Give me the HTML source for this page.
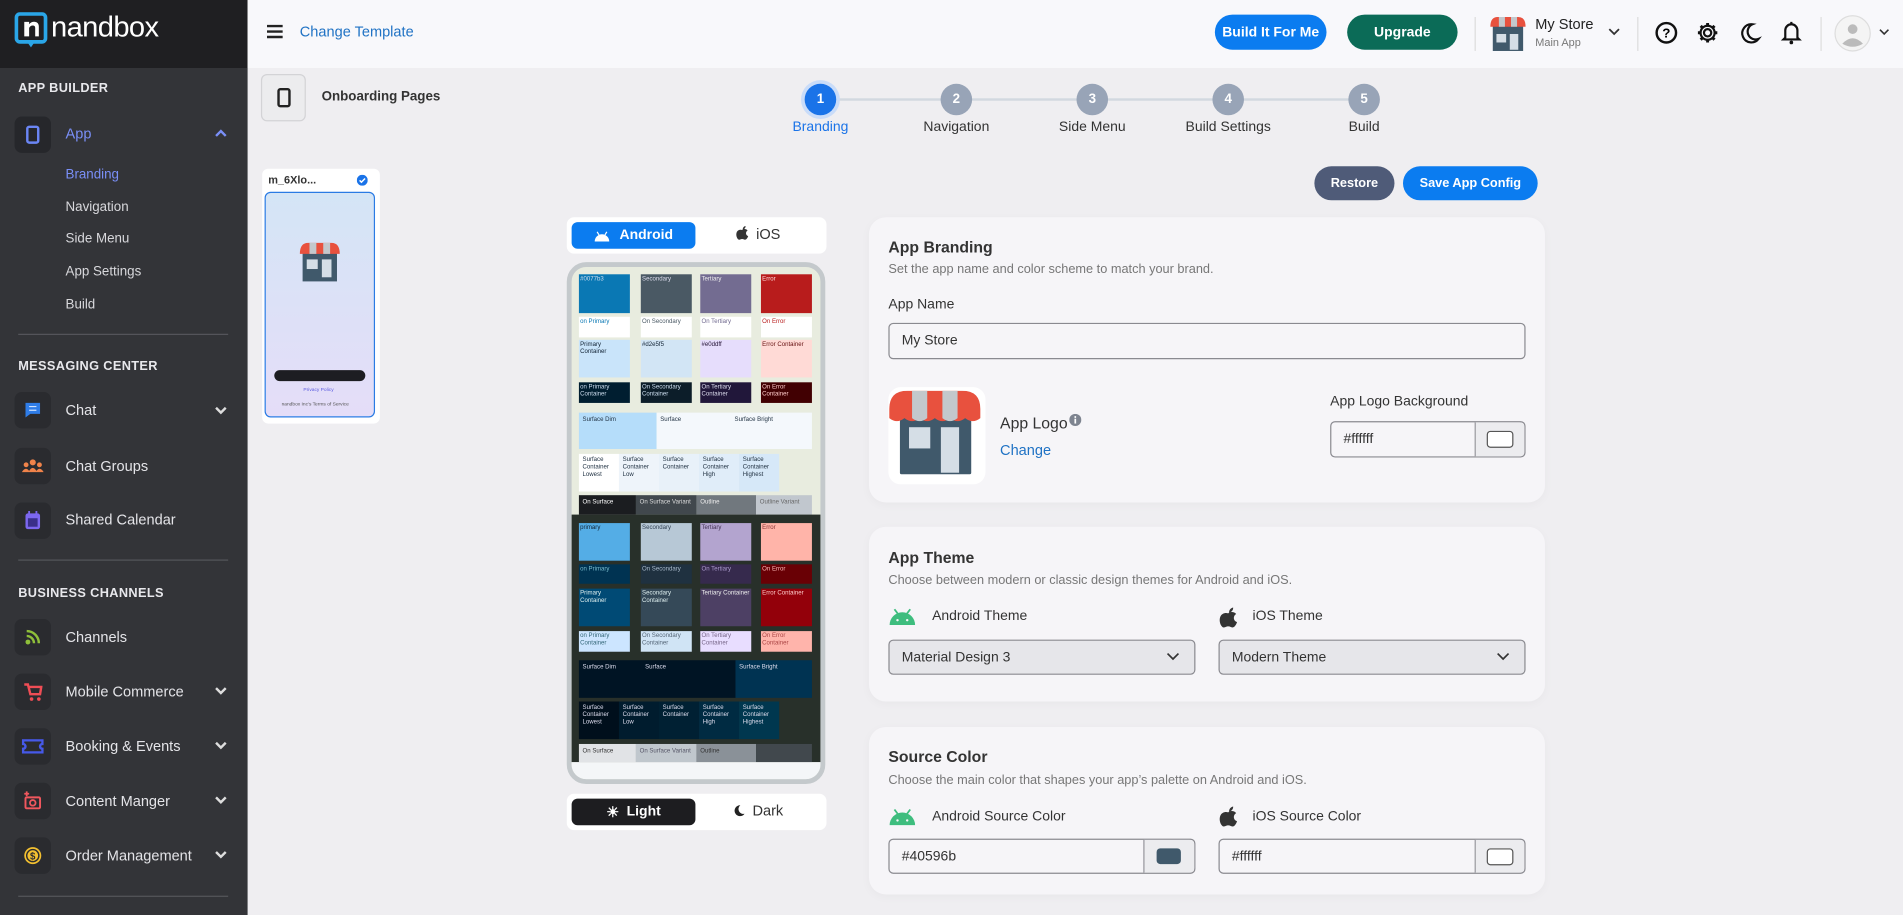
<!DOCTYPE html>
<html><head><meta charset="utf-8">
<style>
*{box-sizing:border-box;margin:0;padding:0}
html,body{width:1903px;height:915px;overflow:hidden;background:#efeef1;font-family:"Liberation Sans",sans-serif}
#w{position:absolute;left:0;top:0;width:1568px;height:754px;transform:scale(1.21365);transform-origin:0 0;background:#efeef1}
.a{position:absolute}
.sb{left:0;top:0;width:204px;height:754px;background:#333438}
.logo{left:0;top:0;width:204px;height:56px;background:#1f1f22}
.sec{left:15px;font-size:10.5px;font-weight:bold;color:#e8e8ec;letter-spacing:.3px}
.ib{left:12px;width:30px;height:30px;background:#2a2b2f;border-radius:6px;display:flex;align-items:center;justify-content:center}
.it{left:54px;font-size:12px;color:#e4e4e8}
.sub{left:54px;font-size:11px;color:#d8d8dc}
.chev{left:176px;width:12px;height:12px}
.hr{left:15px;width:173px;height:1px;background:#55565b}
.hdr{left:204px;top:0;width:1364px;height:56px;background:#f8f8fb}
.btn{border-radius:15px;color:#fff;font-size:11.5px;font-weight:bold;display:flex;align-items:center;justify-content:center}
.card{left:716px;width:557px;background:#f6f5f8;border-radius:14px;box-shadow:0 2px 8px rgba(0,0,0,.03)}
.ttl{font-size:13px;font-weight:bold;color:#333}
.ds{font-size:10.5px;color:#777}
.lb{font-size:11.5px;color:#333}
.inp{border:1px solid #8a8a90;border-radius:4px;background:#f6f5f8;font-size:11.5px;color:#333;display:flex;align-items:center;padding-left:10px}
.sel{background:#e6e6ea}
.c{position:absolute;font-size:5px;line-height:6px;padding:1px;overflow:hidden}
.step{width:26px;height:26px;border-radius:50%;background:#98a4b7;color:#fff;font-size:11px;font-weight:bold;display:flex;align-items:center;justify-content:center;top:69px}
.sl{top:99px;font-size:11.5px;color:#333;text-align:center;width:120px}
</style></head><body><div id="w">

<div class="a sb"></div>
<div class="a logo"></div>
<svg class="a" style="left:12px;top:10px" width="28" height="32" viewBox="0 0 28 32"><rect x="1.5" y="1.5" width="24" height="23" rx="3" fill="none" stroke="#2aa6e8" stroke-width="3"/><path d="M10 24 L13.5 29 L17 24" fill="#2aa6e8"/><path d="M8 8h4v2 q2-2.5 5-2 q3 .5 3 4v8h-3v-7q0-2-2-2t-3 2v7h-4z" fill="#fff"/></svg>
<div class="a" style="left:42px;top:9px;font-size:24px;color:#fff;letter-spacing:-.5px">nandbox</div>

<div class="a sec" style="top:67px">APP BUILDER</div>
<div class="a ib" style="top:96px;background:#26272b"><svg width="12" height="16"><rect x="1.5" y="1.5" width="9" height="13" rx="1.5" fill="none" stroke="#6b86f5" stroke-width="2"/></svg></div>
<div class="a it" style="top:103px;color:#7a8ff7">App</div>
<svg class="a chev" style="top:104px" viewBox="0 0 12 12"><path d="M2 8l4-4 4 4" fill="none" stroke="#7a8ff7" stroke-width="2"/></svg>
<div class="a sub" style="top:138px;color:#7a8ff7">Branding</div>
<div class="a sub" style="top:165px">Navigation</div>
<div class="a sub" style="top:191px">Side Menu</div>
<div class="a sub" style="top:218px">App Settings</div>
<div class="a sub" style="top:245px">Build</div>
<div class="a hr" style="top:275px"></div>
<div class="a sec" style="top:296px">MESSAGING CENTER</div>
<div class="a ib" style="top:323px"><svg width="16" height="16"><path d="M2 2h12v9H6l-4 3z" fill="#2f7de8"/><path d="M5 5h6M5 8h6" stroke="#cfe2ff" stroke-width="1"/></svg></div>
<div class="a it" style="top:331px">Chat</div>
<svg class="a chev" style="top:332px" viewBox="0 0 12 12"><path d="M2 4l4 4 4-4" fill="none" stroke="#ddd" stroke-width="2"/></svg>
<div class="a ib" style="top:369px"><svg width="18" height="12"><circle cx="9" cy="3" r="2.5" fill="#f0834a"/><circle cx="3.5" cy="5" r="2" fill="#f0834a"/><circle cx="14.5" cy="5" r="2" fill="#f0834a"/><path d="M0 11q3-5 6-1q3-5 6 0q3-4 6 1z" fill="#f0834a"/></svg></div>
<div class="a it" style="top:377px">Chat Groups</div>
<div class="a ib" style="top:414px"><svg width="14" height="16"><rect x="1" y="2" width="12" height="13" rx="2" fill="#7c67f0"/><rect x="3" y="6" width="8" height="7" fill="#3a2f8a"/><path d="M4 0v4M10 0v4" stroke="#7c67f0" stroke-width="1.5"/></svg></div>
<div class="a it" style="top:421px">Shared Calendar</div>
<div class="a hr" style="top:461px"></div>
<div class="a sec" style="top:483px">BUSINESS CHANNELS</div>
<div class="a ib" style="top:510px"><svg width="14" height="14"><circle cx="3" cy="11" r="2" fill="#8fbf3a"/><path d="M2 6a6 6 0 0 1 6 6M2 2a10 10 0 0 1 10 10" stroke="#8fbf3a" stroke-width="2" fill="none"/></svg></div>
<div class="a it" style="top:518px">Channels</div>
<div class="a ib" style="top:555px"><svg width="16" height="16"><path d="M1 2h3l2 8h8l1-6H5" fill="none" stroke="#ef4d55" stroke-width="2"/><circle cx="7" cy="14" r="1.5" fill="#ef4d55"/><circle cx="13" cy="14" r="1.5" fill="#ef4d55"/></svg></div>
<div class="a it" style="top:563px">Mobile Commerce</div>
<svg class="a chev" style="top:563px" viewBox="0 0 12 12"><path d="M2 4l4 4 4-4" fill="none" stroke="#ddd" stroke-width="2"/></svg>
<div class="a ib" style="top:600px"><svg width="18" height="12"><path d="M1 1h16v3a2 2 0 0 0 0 4v3H1V8a2 2 0 0 0 0-4z" fill="none" stroke="#4659e8" stroke-width="2"/></svg></div>
<div class="a it" style="top:608px">Booking &amp; Events</div>
<svg class="a chev" style="top:608px" viewBox="0 0 12 12"><path d="M2 4l4 4 4-4" fill="none" stroke="#ddd" stroke-width="2"/></svg>
<div class="a ib" style="top:645px"><svg width="16" height="16"><rect x="2" y="5" width="12" height="9" rx="1" fill="none" stroke="#f0575e" stroke-width="1.6"/><circle cx="8" cy="9.5" r="2.3" fill="none" stroke="#f0575e" stroke-width="1.5"/><path d="M3 0v4M1 2h4" stroke="#f0575e" stroke-width="1.5"/></svg></div>
<div class="a it" style="top:653px">Content Manger</div>
<svg class="a chev" style="top:653px" viewBox="0 0 12 12"><path d="M2 4l4 4 4-4" fill="none" stroke="#ddd" stroke-width="2"/></svg>
<div class="a ib" style="top:690px"><svg width="16" height="16"><circle cx="8" cy="8" r="7" fill="#f3c030"/><circle cx="8" cy="8" r="5" fill="none" stroke="#2a2b2f" stroke-width="1.2"/><text x="8" y="11" font-size="8" text-anchor="middle" fill="#2a2b2f" font-weight="bold" font-family="Liberation Sans">$</text></svg></div>
<div class="a it" style="top:698px">Order Management</div>
<svg class="a chev" style="top:698px" viewBox="0 0 12 12"><path d="M2 4l4 4 4-4" fill="none" stroke="#ddd" stroke-width="2"/></svg>
<div class="a hr" style="top:738px"></div>

<div class="a hdr"></div>
<svg class="a" style="left:220px;top:20px" width="13" height="12"><path d="M0 1.5h13M0 6h13M0 10.5h13" stroke="#222" stroke-width="2"/></svg>
<div class="a" style="left:247px;top:19px;font-size:12px;color:#1f72c4">Change Template</div>
<div class="a btn" style="left:1001px;top:12px;width:92px;height:29px;background:#0b7cf0">Build It For Me</div>
<div class="a btn" style="left:1110px;top:12px;width:91px;height:29px;background:#0b6b57">Upgrade</div>
<div class="a" style="left:1215px;top:14px;width:1px;height:28px;background:#ddd"></div>
<svg class="a" style="left:1227px;top:13px" width="31" height="30" viewBox="0 0 31 30"><rect x="3" y="8" width="25" height="21" fill="#40596b"/><rect x="6" y="15" width="8" height="7" fill="#d5dee6"/><rect x="17" y="15" width="7" height="13" fill="#d5dee6"/><path d="M1 9q0-8 6-8h17q6 0 6 8" fill="#e8513e"/><path d="M8 1h5v8h-5zM18 1h5v8h-5z" fill="#c3c8cc"/></svg>
<div class="a" style="left:1265px;top:13px;font-size:12px;color:#222">My Store</div>
<div class="a" style="left:1265px;top:30px;font-size:9px;color:#777">Main App</div>
<svg class="a" style="left:1325px;top:22px" width="10" height="8"><path d="M1 2l4 4 4-4" fill="none" stroke="#333" stroke-width="1.5"/></svg>
<div class="a" style="left:1349px;top:14px;width:1px;height:28px;background:#ddd"></div>
<svg class="a" style="left:1363px;top:17px" width="20" height="20"><circle cx="10" cy="10" r="8" fill="none" stroke="#111" stroke-width="2"/><text x="10" y="14" font-size="11" text-anchor="middle" font-weight="bold" font-family="Liberation Sans">?</text></svg>
<svg class="a" style="left:1397px;top:17px" width="20" height="20" viewBox="0 0 20 20"><circle cx="10" cy="10" r="3" fill="none" stroke="#111" stroke-width="1.8"/><path d="M10 2v3M10 15v3M2 10h3M15 10h3M4.3 4.3l2.1 2.1M13.6 13.6l2.1 2.1M4.3 15.7l2.1-2.1M13.6 6.4l2.1-2.1" stroke="#111" stroke-width="2.4"/><circle cx="10" cy="10" r="5.8" fill="none" stroke="#111" stroke-width="1.8"/></svg>
<svg class="a" style="left:1432px;top:17px" width="20" height="20"><path d="M12 3a7.5 7.5 0 1 0 5 12a6.5 6.5 0 0 1-5-12z" fill="none" stroke="#111" stroke-width="1.8"/></svg>
<svg class="a" style="left:1467px;top:16px" width="18" height="21"><path d="M4 15V9a5 5 0 0 1 10 0v6l1.5 1.5h-13z" fill="none" stroke="#111" stroke-width="1.8"/><circle cx="9" cy="19" r="1.5" fill="#111"/><path d="M9 2v2" stroke="#111" stroke-width="1.8"/></svg>
<div class="a" style="left:1500px;top:14px;width:1px;height:28px;background:#ddd"></div>
<svg class="a" style="left:1511px;top:12px" width="31" height="31"><circle cx="15.5" cy="15.5" r="14.5" fill="#f4f4f4" stroke="#ddd"/><circle cx="15.5" cy="12" r="4" fill="#bbb"/><path d="M7 24q8.5-9 17 0q-8.5 5-17 0z" fill="#bbb"/></svg>
<svg class="a" style="left:1548px;top:23px" width="9" height="7"><path d="M1 1.5l3.5 3.5 3.5-3.5" fill="none" stroke="#333" stroke-width="1.3"/></svg>

<div class="a" style="left:215px;top:61px;width:37px;height:39px;border:1px solid #d3d3d6;border-radius:5px;background:#ececee"></div>
<svg class="a" style="left:228px;top:72px" width="12" height="17"><rect x="1.5" y="1.5" width="9" height="14" rx="1.5" fill="none" stroke="#222" stroke-width="2"/></svg>
<div class="a" style="left:265px;top:74px;font-size:11px;font-weight:bold;color:#333">Onboarding Pages</div>
<div class="a" style="left:216px;top:139px;width:97px;height:210px;background:#fff;border-radius:5px"></div>
<div class="a" style="left:221px;top:143px;font-size:9px;font-weight:bold;color:#333">m_6Xlo...</div>
<svg class="a" style="left:294px;top:144px" width="9" height="9"><circle cx="4.5" cy="4.5" r="4.5" fill="#1a73e8"/><path d="M2.3 4.6l1.5 1.5 3-3" stroke="#fff" stroke-width="1.2" fill="none"/></svg>
<div class="a" style="left:218px;top:158px;width:91px;height:186px;border:1px solid #2a7be4;border-radius:5px;background:linear-gradient(#d4e5f6,#e5ddf8)"></div>
<svg class="a" style="left:245px;top:199px" width="37" height="34" viewBox="0 0 31 30"><rect x="3" y="8" width="25" height="21" fill="#40596b"/><rect x="6" y="13" width="8" height="7" fill="#d5dee6"/><rect x="17" y="13" width="7" height="13" fill="#d5dee6"/><path d="M1 9q0-8 6-8h17q6 0 6 8" fill="#e8513e"/><path d="M8 1h5v8h-5zM18 1h5v8h-5z" fill="#c3c8cc"/></svg>
<div class="a" style="left:226px;top:305px;width:75px;height:9px;border-radius:5px;background:#1d1d22"></div>
<div class="a" style="left:250px;top:318px;font-size:4px;color:#5a5ae0">Privacy Policy</div>
<div class="a" style="left:232px;top:330px;font-size:4px;color:#555">nandbox Inc's Terms of Service</div>

<div class="a" style="left:676px;top:81px;width:448px;height:2px;background:#d2d8e0"></div>
<div class="a step" style="left:663px;background:#1a73e8;box-shadow:0 0 0 3px #c9dcf9">1</div>
<div class="a step" style="left:775px">2</div>
<div class="a step" style="left:887px">3</div>
<div class="a step" style="left:999px">4</div>
<div class="a step" style="left:1111px">5</div>
<div class="a sl" style="left:616px;color:#1a73e8">Branding</div>
<div class="a sl" style="left:728px">Navigation</div>
<div class="a sl" style="left:840px">Side Menu</div>
<div class="a sl" style="left:952px">Build Settings</div>
<div class="a sl" style="left:1064px">Build</div>

<div class="a btn" style="left:1083px;top:137px;width:66px;height:28px;background:#4f5b78;border-radius:14px;font-size:10.5px">Restore</div>
<div class="a btn" style="left:1156px;top:137px;width:111px;height:28px;background:#0b7cf0;border-radius:14px;font-size:10.5px">Save App Config</div>

<div class="a" style="left:467px;top:179px;width:214px;height:30px;background:#fff;border-radius:6px"></div>
<div class="a btn" style="left:471px;top:183px;width:102px;height:22px;background:#0b7cf0;border-radius:5px"><svg width="14" height="9" style="margin-right:7px"><path d="M1 9a6 6 0 0 1 12 0z" fill="#fff"/><path d="M3 1l1.5 2.5M11 1l-1.5 2.5" stroke="#fff"/></svg>Android</div>
<div class="a" style="left:606px;top:186px;font-size:12px;color:#333"><svg width="11" height="12" style="vertical-align:-1px;margin-right:6px"><path d="M5.5 3.5c1-1.2 3.6-1 4.5.4c-2 1.2-1.6 4 .5 4.6c-.5 1.5-1.5 3-2.5 3s-1.3-.6-2.5-.6s-1.6.6-2.5.6C1.5 11.5 0 8 1 5.5c.7-2 3-2.6 4.5-2zM6 3c0-1.5 1-2.5 2.3-2.8C8.4 1.6 7.4 3 6 3z" fill="#333"/></svg>iOS</div>

<div class="a" style="left:467px;top:216px;width:213px;height:430px;border:4px solid #c4c9cc;border-radius:16px;background:#e8ecdf;overflow:hidden">
 <div style="position:relative;left:-4px;top:-4px;width:213px;height:430px">
  <div class="c" style="left:10px;top:10px;width:42px;height:32px;background:#0a78b4;color:#cde">#0077b3</div>
  <div class="c" style="left:61px;top:10px;width:42px;height:32px;background:#4a5964;color:#dde">Secondary</div>
  <div class="c" style="left:110px;top:10px;width:42px;height:32px;background:#736c91;color:#eee">Tertiary</div>
  <div class="c" style="left:160px;top:10px;width:42px;height:32px;background:#b81c1c;color:#fdd">Error</div>
  <div class="c" style="left:10px;top:45px;width:42px;height:17px;background:#fff;color:#0a78b4">on Primary</div>
  <div class="c" style="left:61px;top:45px;width:42px;height:17px;background:#fff;color:#4a5964">On Secondary</div>
  <div class="c" style="left:110px;top:45px;width:42px;height:17px;background:#fff;color:#736c91">On Tertiary</div>
  <div class="c" style="left:160px;top:45px;width:42px;height:17px;background:#fff;color:#b81c1c">On Error</div>
  <div class="c" style="left:10px;top:64px;width:42px;height:31px;background:#c9e4fa;color:#123">Primary Container</div>
  <div class="c" style="left:61px;top:64px;width:42px;height:31px;background:#d2e5f5;color:#123">#d2e5f5</div>
  <div class="c" style="left:110px;top:64px;width:42px;height:31px;background:#e6ddfc;color:#213">#e0ddff</div>
  <div class="c" style="left:160px;top:64px;width:42px;height:31px;background:#ffdad6;color:#611">Error Container</div>
  <div class="c" style="left:10px;top:99px;width:42px;height:17px;background:#001e30;color:#cde">on Primary Container</div>
  <div class="c" style="left:61px;top:99px;width:42px;height:17px;background:#0c1d29;color:#cde">On Secondary Container</div>
  <div class="c" style="left:110px;top:99px;width:42px;height:17px;background:#21173a;color:#dde">On Tertiary Container</div>
  <div class="c" style="left:160px;top:99px;width:42px;height:17px;background:#410002;color:#fcc">On Error Container</div>
  <div class="c" style="left:10px;top:124px;width:64px;height:30px;background:#b5ddfa;color:#234;padding:3px">Surface Dim</div>
  <div class="c" style="left:74px;top:124px;width:128px;height:30px;background:#f4f8fc;color:#234;padding:3px">Surface<span style="margin-left:44px">Surface Bright</span></div>
  <div class="c" style="left:10px;top:158px;width:33px;height:31px;background:#fff;color:#234;padding:2px 3px">Surface Container Lowest</div>
  <div class="c" style="left:43px;top:158px;width:33px;height:31px;background:#eef4fa;color:#234;padding:2px 3px">Surface Container Low</div>
  <div class="c" style="left:76px;top:158px;width:33px;height:31px;background:#e8f1f9;color:#234;padding:2px 3px">Surface Container</div>
  <div class="c" style="left:109px;top:158px;width:33px;height:31px;background:#e0edf9;color:#234;padding:2px 3px">Surface Container High</div>
  <div class="c" style="left:142px;top:158px;width:33px;height:31px;background:#d6e8f8;color:#234;padding:2px 3px">Surface Container Highest</div>
  <div class="c" style="left:10px;top:192px;width:47px;height:16px;background:#1b1d20;color:#fff;padding:3px">On Surface</div>
  <div class="c" style="left:57px;top:192px;width:50px;height:16px;background:#41484d;color:#ddd;padding:3px">On Surface Variant</div>
  <div class="c" style="left:107px;top:192px;width:49px;height:16px;background:#71787e;color:#eee;padding:3px">Outline</div>
  <div class="c" style="left:156px;top:192px;width:46px;height:16px;background:#c1c7ce;color:#666;padding:3px">Outline Variant</div>
  <div class="c" style="left:0;top:208px;width:213px;height:204px;background:#28302a;padding:0"></div>
  <div class="c" style="left:10px;top:215px;width:42px;height:31px;background:#54ade6;color:#123">primary</div>
  <div class="c" style="left:61px;top:215px;width:42px;height:31px;background:#b7c8d6;color:#345">Secondary</div>
  <div class="c" style="left:110px;top:215px;width:42px;height:31px;background:#b3a4cf;color:#435">Tertiary</div>
  <div class="c" style="left:160px;top:215px;width:42px;height:31px;background:#ffb4a9;color:#833">Error</div>
  <div class="c" style="left:10px;top:249px;width:42px;height:16px;background:#003352;color:#7bc">on Primary</div>
  <div class="c" style="left:61px;top:249px;width:42px;height:16px;background:#1f3140;color:#abc">On Secondary</div>
  <div class="c" style="left:110px;top:249px;width:42px;height:16px;background:#362a4d;color:#a9c">On Tertiary</div>
  <div class="c" style="left:160px;top:249px;width:42px;height:16px;background:#690005;color:#fbb">On Error</div>
  <div class="c" style="left:10px;top:269px;width:42px;height:31px;background:#004a75;color:#dee">Primary Container</div>
  <div class="c" style="left:61px;top:269px;width:42px;height:31px;background:#354958;color:#dee">Secondary Container</div>
  <div class="c" style="left:110px;top:269px;width:42px;height:31px;background:#4d4064;color:#eee">Tertiary Container</div>
  <div class="c" style="left:160px;top:269px;width:42px;height:31px;background:#93000a;color:#fcc">Error Container</div>
  <div class="c" style="left:10px;top:304px;width:42px;height:17px;background:#cce5ff;color:#367">on Primary Container</div>
  <div class="c" style="left:61px;top:304px;width:42px;height:17px;background:#d0e4f5;color:#567">On Secondary Container</div>
  <div class="c" style="left:110px;top:304px;width:42px;height:17px;background:#e8ddff;color:#768">On Tertiary Container</div>
  <div class="c" style="left:160px;top:304px;width:42px;height:17px;background:#ffb4ab;color:#a44">On Error Container</div>
  <div class="c" style="left:10px;top:328px;width:129px;height:31px;background:#001424;color:#dde;padding:3px">Surface Dim<span style="margin-left:24px">Surface</span></div>
  <div class="c" style="left:139px;top:328px;width:63px;height:31px;background:#003352;color:#dde;padding:3px">Surface Bright</div>
  <div class="c" style="left:10px;top:362px;width:33px;height:31px;background:#000f1c;color:#dde;padding:2px 3px">Surface Container Lowest</div>
  <div class="c" style="left:43px;top:362px;width:33px;height:31px;background:#001c2e;color:#dde;padding:2px 3px">Surface Container Low</div>
  <div class="c" style="left:76px;top:362px;width:33px;height:31px;background:#002033;color:#dde;padding:2px 3px">Surface Container</div>
  <div class="c" style="left:109px;top:362px;width:33px;height:31px;background:#002b42;color:#dde;padding:2px 3px">Surface Container High</div>
  <div class="c" style="left:142px;top:362px;width:33px;height:31px;background:#00374f;color:#dde;padding:2px 3px">Surface Container Highest</div>
  <div class="c" style="left:10px;top:397px;width:47px;height:15px;background:#e1e3e6;color:#333;padding:3px">On Surface</div>
  <div class="c" style="left:57px;top:397px;width:50px;height:15px;background:#c0c7cd;color:#556;padding:3px">On Surface Variant</div>
  <div class="c" style="left:107px;top:397px;width:49px;height:15px;background:#8a9198;color:#333;padding:3px">Outline</div>
  <div class="c" style="left:156px;top:397px;width:46px;height:15px;background:#41484d;padding:3px"></div>
  <div class="c" style="left:0;top:412px;width:213px;height:20px;background:#f4f6f8"></div>
 </div>
</div>

<div class="a" style="left:467px;top:654px;width:214px;height:30px;background:#fff;border-radius:6px"></div>
<div class="a btn" style="left:471px;top:658px;width:102px;height:22px;background:#1d1d20;border-radius:5px"><span style="font-size:12px;margin-right:6px">&#9728;</span>Light</div>
<div class="a" style="left:604px;top:661px;font-size:12px;color:#333"><svg width="10" height="10" style="margin-right:6px;vertical-align:-1px"><path d="M6 .5a4.5 4.5 0 1 0 3.5 7a4 4 0 0 1-3.5-7z" fill="#222"/></svg>Dark</div>

<div class="a card" style="top:179px;height:235px"></div>
<div class="a ttl" style="left:732px;top:196px">App Branding</div>
<div class="a ds" style="left:732px;top:216px">Set the app name and color scheme to match your brand.</div>
<div class="a lb" style="left:732px;top:245px">App Name</div>
<div class="a inp" style="left:732px;top:266px;width:525px;height:30px">My Store</div>
<div class="a" style="left:732px;top:319px;width:80px;height:80px;background:#fff;border-radius:10px"></div>
<svg class="a" style="left:732px;top:322px" width="79" height="70" viewBox="0 0 31 28"><rect x="3.5" y="7" width="23.5" height="20.5" rx=".5" fill="#40596b"/><rect x="6.5" y="12" width="7" height="7" fill="#d5dee6"/><rect x="17" y="12" width="6" height="15" fill="#d5dee6"/><path d="M0 9V6q0-6 6-6h18q6 0 6 6v3q-2.5 2-5 0q-2.5 2-5 0q-2.5 2-5 0q-2.5 2-5 0q-2.5 2-5 0q-2.5 2-5 0z" fill="#e8513e"/><path d="M7.5 0h5v9q-2.5 2-5 0zM17.5 0h5v9q-2.5 2-5 0z" fill="#c3c8cc"/></svg>
<div class="a" style="left:824px;top:341px;font-size:13px;color:#333">App Logo</div>
<svg class="a" style="left:881px;top:341px" width="10" height="10"><circle cx="5" cy="5" r="5" fill="#7e8490"/><rect x="4.3" y="4" width="1.4" height="4" fill="#fff"/><circle cx="5" cy="2.6" r=".8" fill="#fff"/></svg>
<div class="a" style="left:824px;top:364px;font-size:12px;color:#1f72c4">Change</div>
<div class="a lb" style="left:1096px;top:325px">App Logo Background</div>
<div class="a inp" style="left:1096px;top:347px;width:161px;height:30px">#ffffff</div>
<div class="a" style="left:1215px;top:348px;width:41px;height:28px;border-left:1px solid #8a8a90;background:#ececef;border-radius:0 4px 4px 0"></div>
<div class="a" style="left:1225px;top:355px;width:22px;height:14px;background:#fff;border:1px solid #555;border-radius:3px"></div>

<div class="a card" style="top:434px;height:144px"></div>
<div class="a ttl" style="left:732px;top:452px">App Theme</div>
<div class="a ds" style="left:732px;top:472px">Choose between modern or classic design themes for Android and iOS.</div>
<svg class="a" style="left:732px;top:501px" width="23" height="14"><path d="M1 14a10.5 10.5 0 0 1 21 0z" fill="#3ebd7e"/><path d="M5 1l3 4M18 1l-3 4" stroke="#3ebd7e" stroke-width="1.5"/><circle cx="7.5" cy="10" r="1" fill="#f6f5f8"/><circle cx="15.5" cy="10" r="1" fill="#f6f5f8"/></svg>
<div class="a lb" style="left:768px;top:502px">Android Theme</div>
<svg class="a" style="left:1004px;top:500px" width="16" height="18" viewBox="0 0 11 12"><path d="M5.5 3.5c1-1.2 3.6-1 4.5.4c-2 1.2-1.6 4 .5 4.6c-.5 1.5-1.5 3-2.5 3s-1.3-.6-2.5-.6s-1.6.6-2.5.6C1.5 11.5 0 8 1 5.5c.7-2 3-2.6 4.5-2zM6 3c0-1.5 1-2.5 2.3-2.8C8.4 1.6 7.4 3 6 3z" fill="#333"/></svg>
<div class="a lb" style="left:1032px;top:502px">iOS Theme</div>
<div class="a inp sel" style="left:732px;top:527px;width:253px;height:29px">Material Design 3</div>
<svg class="a" style="left:961px;top:537px" width="11" height="8"><path d="M1 1.5l4.5 4.5 4.5-4.5" fill="none" stroke="#333" stroke-width="1.4"/></svg>
<div class="a inp sel" style="left:1004px;top:527px;width:253px;height:29px">Modern Theme</div>
<svg class="a" style="left:1233px;top:537px" width="11" height="8"><path d="M1 1.5l4.5 4.5 4.5-4.5" fill="none" stroke="#333" stroke-width="1.4"/></svg>

<div class="a card" style="top:599px;height:138px"></div>
<div class="a ttl" style="left:732px;top:616px">Source Color</div>
<div class="a ds" style="left:732px;top:637px">Choose the main color that shapes your app’s palette on Android and iOS.</div>
<svg class="a" style="left:732px;top:666px" width="23" height="14"><path d="M1 14a10.5 10.5 0 0 1 21 0z" fill="#3ebd7e"/><path d="M5 1l3 4M18 1l-3 4" stroke="#3ebd7e" stroke-width="1.5"/><circle cx="7.5" cy="10" r="1" fill="#f6f5f8"/><circle cx="15.5" cy="10" r="1" fill="#f6f5f8"/></svg>
<div class="a lb" style="left:768px;top:667px">Android Source Color</div>
<svg class="a" style="left:1004px;top:664px" width="16" height="18" viewBox="0 0 11 12"><path d="M5.5 3.5c1-1.2 3.6-1 4.5.4c-2 1.2-1.6 4 .5 4.6c-.5 1.5-1.5 3-2.5 3s-1.3-.6-2.5-.6s-1.6.6-2.5.6C1.5 11.5 0 8 1 5.5c.7-2 3-2.6 4.5-2zM6 3c0-1.5 1-2.5 2.3-2.8C8.4 1.6 7.4 3 6 3z" fill="#333"/></svg>
<div class="a lb" style="left:1032px;top:667px">iOS Source Color</div>
<div class="a inp" style="left:732px;top:691px;width:253px;height:29px">#40596b</div>
<div class="a" style="left:942px;top:692px;width:42px;height:27px;border-left:1px solid #8a8a90;background:#ececef;border-radius:0 4px 4px 0"></div>
<div class="a" style="left:953px;top:699px;width:20px;height:13px;background:#40596b;border-radius:3px"></div>
<div class="a inp" style="left:1004px;top:691px;width:253px;height:29px">#ffffff</div>
<div class="a" style="left:1215px;top:692px;width:41px;height:27px;border-left:1px solid #8a8a90;background:#ececef;border-radius:0 4px 4px 0"></div>
<div class="a" style="left:1225px;top:699px;width:22px;height:14px;background:#fff;border:1px solid #555;border-radius:3px"></div>

</div></body></html>
